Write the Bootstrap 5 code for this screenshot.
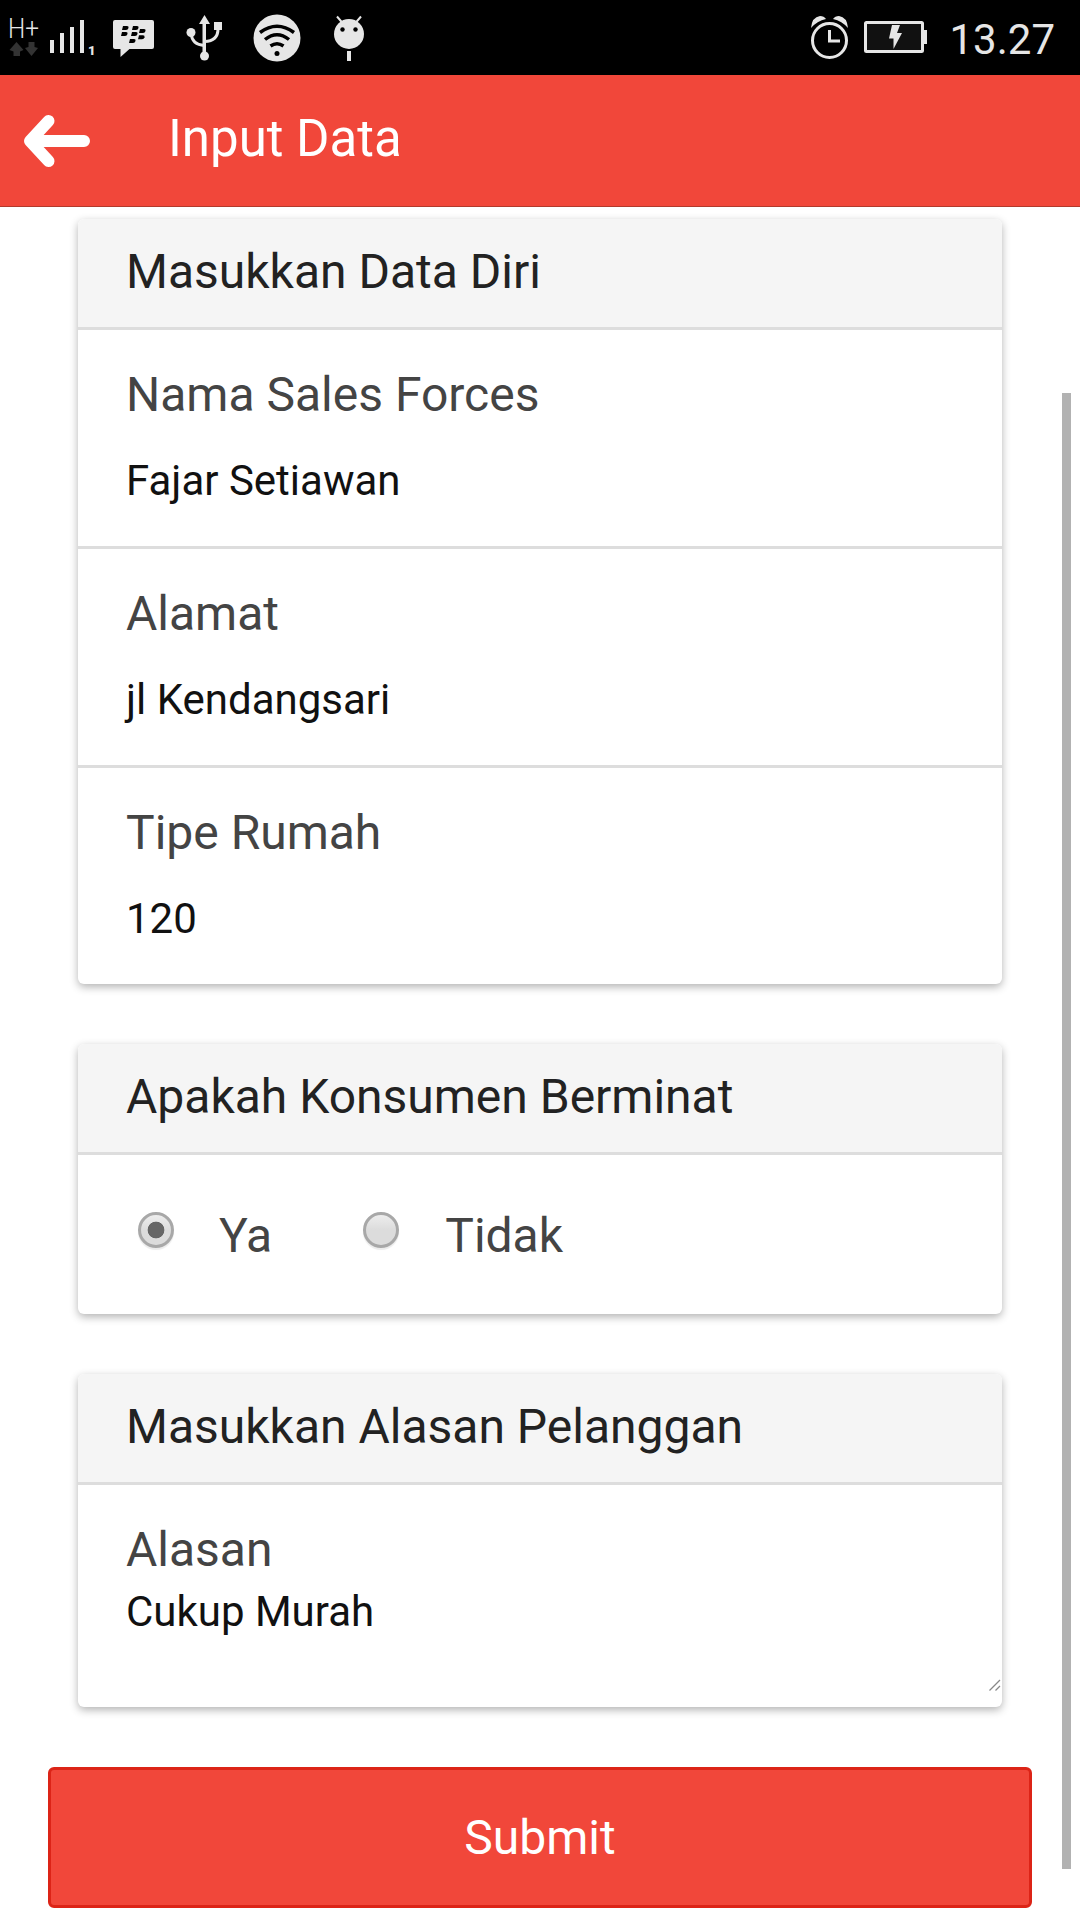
<!DOCTYPE html>
<html lang="id">
<head>
<meta charset="utf-8">
<meta name="viewport" content="width=device-width, initial-scale=1">
<title>Input Data</title>
<link href="https://cdn.jsdelivr.net/npm/bootstrap@5.3.0/dist/css/bootstrap.min.css" rel="stylesheet">
<style>
  body { font-family: Roboto, "Noto Sans", sans-serif; background: #fff; width: 1080px; height: 1920px; overflow: hidden; color: #444; }
  .status-bar { height: 75px; background: #000; }
  .status-bar svg { display: block; }
  .clock { font-size: 42px; line-height: 75px; color: #e6e6e6; padding: 2px 25px 0 0; }
  .app-bar { height: 132px; background: #f1473a; border-bottom: 1px solid #b23a2c; }
  .app-title { font-size: 51px; line-height: 60px; color: #fff; margin-left: 74px; margin-top: -4px; }
  .content { padding: 12px 78px 0; }
  .form-card { border: 0; border-radius: 6px; box-shadow: 0 3px 9px rgba(0,0,0,.3); margin-bottom: 60px; overflow: visible; }
  .form-card .card-header { height: 111px; padding: 0 48px; font-size: 48px; line-height: 105px; color: #222; background: #f5f5f5; border-bottom: 3px solid #ddd; border-radius: 6px 6px 0 0; }
  .field { height: 219px; padding: 36px 48px 0; border: 0; border-bottom: 3px solid #ddd; background: none; color: #444; }
  .field:last-child { height: 216px; border-bottom: 0; }
  .field-label { font-size: 48px; line-height: 57px; margin: 0; display: block; }
  .field-value { font-size: 42px; line-height: 60px; color: #111; margin-top: 28px; }
  .field.area:last-child { height: 222px; }
  .area .field-value { margin-top: 4px; }
  .choices { height: 159px; padding: 1px 0 0 60px; font-size: 48px; line-height: 57px; }
  .choice-dot { appearance: none; width: 36px; height: 36px; border-radius: 50%; border: 3px solid #a8a8a8; background: linear-gradient(#ededed, #dcdcdc 50%); box-shadow: 0 2px 1px rgba(0,0,0,.08); margin: -10px 0 0; }
  .choice-dot:checked { background: radial-gradient(circle, #666 8px, transparent 8.7px), linear-gradient(#ededed, #dcdcdc 50%); }
  .choice-text { margin-left: 45px; }
  .second { margin-left: 91px; }
  .second .choice-text { margin-left: 46px; }
  .grip { right: 1px; bottom: 16px; }
  .submit-btn { display: block; width: 984px; height: 141px; margin: 0 -30px; font-size: 48px; line-height: 1; color: #fff; background: #f1473a; border: 3px solid #dc2417; border-radius: 6px; }
  .scroll-thumb { left: 1062px; top: 393px; width: 9px; height: 1476px; background: #b2b2b2; }
</style>
</head>
<body class="position-relative">
<div class="status-bar d-flex justify-content-between">
  <svg width="380" height="75" viewBox="0 0 380 75" fill="#e6e6e6">
    <text x="8" y="37.500" font-family="Roboto" font-weight="300" font-size="27" textLength="31" lengthAdjust="spacingAndGlyphs">H+</text>
    <g fill="#333"><path d="M16.500 42 23.500 50 20 51.500V56H13.500V51.500L9.500 50Z"/><path d="M31.500 56 38 48 34.500 47V42H28.500V47L25 48Z"/></g>
    <path d="M50 40h4v13h-4zM60 33h4v20h-4zM70 27h4v26h-4zM80 20h4v33h-4z"/>
    <text x="88" y="55" font-family="Roboto" font-weight="900" font-size="13">1</text>
    <path d="M115 20h37a2 2 0 0 1 2 2v25a2 2 0 0 1-2 2h-22.500l-9 8v-8H115a2 2 0 0 1-2-2V22a2 2 0 0 1 2-2z"/>
    <g fill="#000"><path id="key" d="M123 26h4q2 0 1.500 2t-2.500 2h-4z"/><use href="#key" x="10"/><use href="#key" x="-1" y="6"/><use href="#key" x="9" y="6"/><use href="#key" x="17" y="3"/><use href="#key" x="16" y="9.300"/><use href="#key" x="7" y="13"/></g>
    <path d="M204.500 15l5.500 9h-4v32h-3.500V24H199z"/><circle cx="204.500" cy="56" r="4.500"/><circle cx="191" cy="32.500" r="4.500"/><path d="M214 22h8v8h-8z"/>
    <path d="M191 33q1 12 13.500 12.500M218 29q0 12-13.500 12.500" fill="none" stroke="#e6e6e6" stroke-width="3"/>
    <circle cx="277" cy="38" r="23.500"/>
    <g fill="none" stroke="#000" stroke-width="3.500"><path d="M260 32.500q17-12.500 34 0M265 39.500q12-9.500 24 0M270.500 46q6.500-4.500 13 0"/></g><circle cx="277" cy="53.500" r="2.500" fill="#000"/>
    <circle cx="349" cy="34" r="15"/><path d="M337 16.500l6 7M361 16.500l-6 7" stroke="#e6e6e6" stroke-width="2"/><circle cx="342.500" cy="29.500" r="2.200" fill="#000"/><circle cx="355.500" cy="29.500" r="2.200" fill="#000"/><path d="M347 51h4v10h-4z"/>
  </svg>
  <div class="d-flex">
    <svg width="145" height="75" viewBox="805 0 145 75" fill="#e6e6e6">
      <circle cx="829.500" cy="40.500" r="17" fill="none" stroke="#e6e6e6" stroke-width="3"/>
      <path d="M811 28q1-11 9-12 4 0 6 3-9 2-15 9zM848 28q-1-11-9-12-4 0-6 3 9 2 15 9z"/>
      <path d="M829.500 30v11H840" fill="none" stroke="#e6e6e6" stroke-width="3"/>
      <rect x="865.500" y="22.500" width="57" height="29" rx="1" fill="#111" stroke="#e6e6e6" stroke-width="3"/>
      <path d="M924 30h3v14h-3zM892 25h8l-3 8h5l-8.500 16v-10.500H889z"/>
    </svg>
    <div class="clock">13.27</div>
  </div>
</div>
<header class="app-bar d-flex align-items-center">
  <svg width="94" height="131" viewBox="0 75 94 131" fill="none" stroke="#fff" stroke-width="12" stroke-linecap="round" stroke-linejoin="round"><path d="M84 141H31M48.500 121 30 141l18.500 20"/></svg>
  <div class="app-title">Input Data</div>
</header>
<main class="content">
  <section class="card form-card">
    <div class="card-header">Masukkan Data Diri</div>
    <div class="field"><div class="field-label">Nama Sales Forces</div><div class="field-value">Fajar Setiawan</div></div>
    <div class="field"><div class="field-label">Alamat</div><div class="field-value">jl Kendangsari</div></div>
    <div class="field"><div class="field-label">Tipe Rumah</div><div class="field-value">120</div></div>
  </section>
  <section class="card form-card">
    <div class="card-header">Apakah Konsumen Berminat</div>
    <div class="choices d-flex align-items-center">
      <label class="d-flex align-items-center"><input class="choice-dot" type="radio" name="minat" checked><span class="choice-text">Ya</span></label>
      <label class="d-flex align-items-center second"><input class="choice-dot" type="radio" name="minat"><span class="choice-text">Tidak</span></label>
    </div>
  </section>
  <section class="card form-card">
    <div class="card-header">Masukkan Alasan Pelanggan</div>
    <div class="field area position-relative">
      <div class="field-label">Alasan</div><div class="field-value">Cukup Murah</div>
      <svg class="grip position-absolute" width="12" height="12" viewBox="0 0 12 12" stroke="#888" stroke-width="1.300"><path d="M.5 11.500 11 1M6.500 11.500 11 7"/></svg>
    </div>
  </section>
  <button class="btn submit-btn" type="button">Submit</button>
</main>
<div class="scroll-thumb position-absolute"></div>
<script src="https://cdn.jsdelivr.net/npm/bootstrap@5.3.0/dist/js/bootstrap.bundle.min.js"></script>
</body>
</html>
